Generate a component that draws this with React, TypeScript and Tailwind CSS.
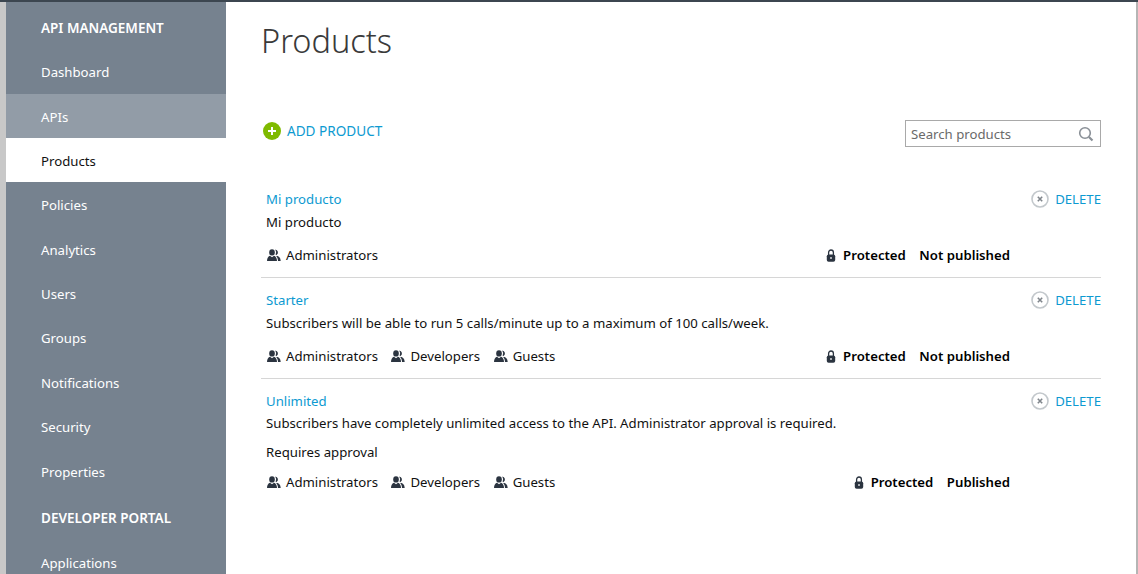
import React from "react";

const navTop = ["Dashboard", "APIs", "Products", "Policies", "Analytics", "Users", "Groups", "Notifications", "Security", "Properties"];

const PeopleIcon = () => (
  <svg width="14" height="13" viewBox="0 0 14 13" className="shrink-0" fill="#2b3440">
    <ellipse cx="5" cy="3.400" rx="2.800" ry="3.200" />
    <path d="M0 12c0-3 1.400-4.800 3-5.300L5 8.200l2-1.500c1.600.5 3 2.300 3 5.300z" />
    <path d="M8.200 0.600a3 3 0 0 1 1.400 5.500l-1-.3a5 5 0 0 0-.4-5.200z" />
    <path d="M9.800 6.800c1.800.4 3.900 2 3.900 5.200h-2.700c0-2-.5-3.700-1.700-4.600z" />
  </svg>
);

const LockIcon = () => (
  <svg width="10" height="13" viewBox="0 0 10 13" className="shrink-0">
    <path d="M2.600 6V3.400a2.400 2.400 0 0 1 4.800 0V6" fill="none" stroke="#2b3440" strokeWidth="1.300" />
    <rect x="0.800" y="5.500" width="8.400" height="7.300" rx="1.800" fill="#2b3440" />
    <rect x="4.400" y="8" width="1.200" height="2" fill="#fff" />
  </svg>
);

const DeleteIcon = () => (
  <svg width="18" height="18" viewBox="0 0 18 18" className="shrink-0">
    <circle cx="9" cy="9" r="8" fill="none" stroke="#c3c8cc" strokeWidth="1.600" />
    <path d="M6.800 6.800l4.400 4.400M11.200 6.800l-4.400 4.400" stroke="#7f858b" strokeWidth="1.600" />
  </svg>
);

const AddIcon = () => (
  <svg width="18" height="18" viewBox="0 0 18 18" className="shrink-0">
    <circle cx="9" cy="9" r="9" fill="#7fba00" />
    <path d="M9 5v8M5 9h8" stroke="#fff" strokeWidth="2" />
  </svg>
);

const SearchIcon = () => (
  <svg width="16" height="16" viewBox="0 0 16 16" className="shrink-0">
    <circle cx="7" cy="7" r="5.300" fill="none" stroke="#8a9097" strokeWidth="1.600" />
    <path d="M11 11l3.500 3.500" stroke="#8a9097" strokeWidth="2.200" />
  </svg>
);

interface IProductProps {
  name: string;
  description: string;
  approval?: boolean;
  groups: string[];
  status: string;
  last?: boolean;
}

const Product: React.FC<IProductProps> = ({ name, description, approval, groups, status, last }) => {
  return (
    <div className={last ? "pt-[13.4px] pb-[8px]" : "pt-[13.4px] pb-[12.6px] border-b border-[#d6d6d6]"}>
      <div className="flex items-center justify-between pl-[5px] h-[18px]">
        <a className="text-[#0d9ad1]">{name}</a>
        <div className="flex items-center gap-[6px]">
          <DeleteIcon />
          <a className="text-[#0d9ad1]">DELETE</a>
        </div>
      </div>
      <div className={approval ? "pl-[5px] mt-[4px] h-[18px] leading-[18px] text-[#111]" : "pl-[5px] mt-[5px] h-[18px] leading-[18px] text-[#111]"}>{description}</div>
      {approval && <div className="pl-[5px] mt-[11px] h-[18px] leading-[18px] text-[#111]">Requires approval</div>}
      <div className={approval ? "flex items-center justify-between pl-[6px] mt-[12px] pr-[91px] h-[18px]" : "flex items-center justify-between pl-[6px] mt-[15px] pr-[91px] h-[18px]"}>
        <div className="flex items-center gap-[13.5px]">
          {groups.map((group) => (
            <div key={group} className="flex items-center gap-[5px] text-[#111]">
              <PeopleIcon />
              {group}
            </div>
          ))}
        </div>
        <div className="flex items-center font-semibold text-black">
          <LockIcon />
          <span className="ml-[7px]">Protected</span>
          <span className="ml-[13.5px]">{status}</span>
        </div>
      </div>
    </div>
  );
};

const App = () => {
  return (
    <div
      className="flex h-[574px] w-[1138px] overflow-hidden bg-white border-t-2 border-[#3c4650] text-[13.2px] leading-[18px]"
      style={{ fontFamily: '"Noto Sans", sans-serif' }}
    >
      <div className="w-[6px] shrink-0 bg-[#c8c8c8]" />
      <nav className="w-[220px] shrink-0 bg-[#76828f] text-white">
        <div className="h-[47.2px] pt-[4px] flex items-center pl-[35px] font-semibold text-[13.5px] text-[#fff]">API MANAGEMENT</div>
        {navTop.map((item) => (
          <div
            key={item}
            className={
              item === "Products"
                ? "h-[44.4px] pt-[1.5px] flex items-center pl-[35px] bg-white text-[#111]"
                : item === "APIs"
                  ? "h-[44.4px] pt-[1.5px] flex items-center pl-[35px] bg-[#929ca7]"
                  : "h-[44.4px] pt-[1.5px] flex items-center pl-[35px]"
            }
          >
            {item}
          </div>
        ))}
        <div className="h-[48px] pt-[1px] flex items-center pl-[35px] font-semibold text-[13.5px]">DEVELOPER PORTAL</div>
        <div className="h-[44px] flex items-center pl-[35px]">Applications</div>
      </nav>
      <main className="flex-1 pl-[35px] pr-[35px] border-r-2 border-[#b5b5b5]">
        <h1 className="text-[32.5px] leading-[48px] mt-[15px] font-light text-[#3a3a3a]">Products</h1>
        <div className="flex items-start justify-between mt-[51px]">
          <div className="flex items-center gap-[6px] pl-[2px] mt-[6px] text-[13.6px]">
            <AddIcon />
            <a className="text-[#0d9ad1]">ADD PRODUCT</a>
          </div>
          <div className="flex items-center justify-between w-[196px] h-[27px] border border-[#a9a9a9] pl-[5px] pr-[6px] mt-[4px]">
            <span className="text-[#6a6a6a]">Search products</span>
            <SearchIcon />
          </div>
        </div>
        <div className="mt-[30px]">
          <Product name="Mi producto" description="Mi producto" groups={["Administrators"]} status="Not published" />
          <Product
            name="Starter"
            description="Subscribers will be able to run 5 calls/minute up to a maximum of 100 calls/week."
            groups={["Administrators", "Developers", "Guests"]}
            status="Not published"
          />
          <Product
            name="Unlimited"
            description="Subscribers have completely unlimited access to the API. Administrator approval is required."
            approval
            groups={["Administrators", "Developers", "Guests"]}
            status="Published"
            last
          />
        </div>
      </main>
    </div>
  );
};

export default App;
